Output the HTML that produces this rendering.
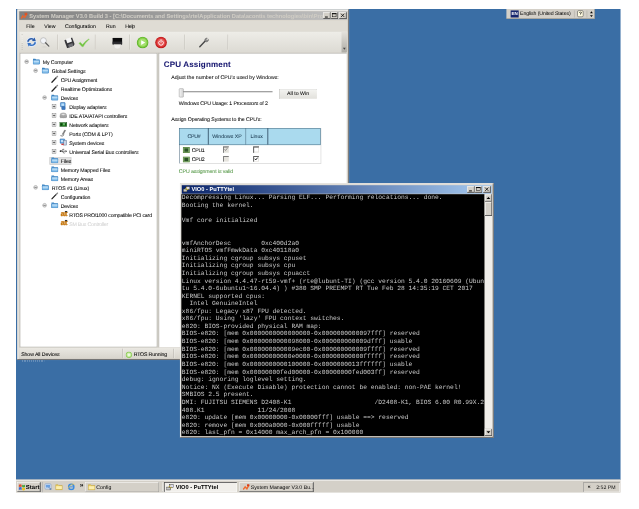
<!DOCTYPE html>
<html>
<head>
<meta charset="utf-8">
<title>Desktop</title>
<style>
html,body{margin:0;padding:0;background:#fff;}
body{width:639px;height:509px;overflow:hidden;position:relative;font-family:"Liberation Sans",sans-serif;}
#scr{position:absolute;left:16.2px;top:9px;width:1280px;height:1024px;transform:scale(0.47245);transform-origin:0 0;filter:blur(0.01px);overflow:hidden;font-size:11px;color:#000;text-rendering:geometricPrecision;}
.abs{position:absolute;}
.win{position:absolute;background:#d4d0c8;box-shadow:inset -1px -1px 0 #6a6a6a,inset 1px 1px 0 #d4d0c8,inset -2px -2px 0 #808080,inset 2px 2px 0 #fff;}
.tb{position:absolute;left:4px;right:4px;top:4px;height:18px;color:#fff;font-weight:bold;font-size:12px;line-height:18px;white-space:nowrap;overflow:hidden;}
.tb.act{background:linear-gradient(90deg,#0a246a,#a6caf0);}
.tb.inact{background:linear-gradient(90deg,#808080,#c0c0c0);color:#cfccc4;}
.cap{position:absolute;top:2px;width:16px;height:14px;background:#d4d0c8;box-shadow:inset -1px -1px 0 #404040,inset 1px 1px 0 #fff,inset -2px -2px 0 #808080;}
.cap svg{position:absolute;left:0;top:0;}
/* System manager */
#sm .menu{position:absolute;left:4px;right:4px;top:23px;height:24px;background:#dfdcd4;}
#sm .menu span{position:absolute;top:8px;font-size:11px;line-height:13px;}
#sm .tool{position:absolute;left:4px;right:4px;top:47px;height:44px;background:linear-gradient(#eeede8,#dcdad3);}
#sm .tool .sep{position:absolute;top:6px;width:1px;height:32px;background:#b8b5ad;box-shadow:1px 0 0 #f4f3ef;}
#tree{position:absolute;left:5px;top:92px;width:291px;height:623px;background:#fff;border:1px solid #9a9890;box-sizing:border-box;}
#right{position:absolute;left:299px;top:92px;width:398px;height:623px;background:#fff;border-left:1px solid #9a9890;border-top:1px solid #9a9890;box-sizing:border-box;}
.ti{position:absolute;height:19px;line-height:19px;font-size:11px;white-space:nowrap;}
.ti svg{position:absolute;margin-top:-2.500px;}
.ti span{margin-top:1.500px;margin-left:1px;letter-spacing:-0.2px;}
#sm{-webkit-text-stroke:0.1px;}
.exp{position:absolute;margin-top:-1.300px;width:9px;height:9px;border-radius:5px;border:1px solid #8c8c8c;background:#dedede;box-sizing:border-box;}
.exp:before{content:"";position:absolute;left:1px;top:3px;width:5px;height:1px;background:#404040;}
.exp.plus{border-radius:0;border-color:#7a7a7a;background:#fff;}
.exp.plus:before{background:#000;}
.exp.plus:after{content:"";position:absolute;left:3px;top:1px;width:1px;height:5px;background:#000;}
#status{position:absolute;left:4px;right:4px;top:716px;height:22px;background:linear-gradient(#eae8e2,#d8d5cd);}
.rt{font-size:11px;line-height:13px;white-space:nowrap;}
.hd{top:0;height:33px;line-height:38px;text-align:center;font-size:11px;color:#1c3a50;}
/* putty */
#pt .term{color:#adadad;position:absolute;left:3.5px;top:23px;width:642px;height:512px;background:#000;color:#c8c8c8;font-family:"Liberation Mono",monospace;font-size:13.333px;line-height:16.050px;white-space:pre;overflow:hidden;}
#pt .term pre{margin:0;position:absolute;left:1px;top:0.500px;font:inherit;}
.sb{position:absolute;background:#d4d0c8;box-shadow:inset -1px -1px 0 #404040,inset 1px 1px 0 #d4d0c8,inset -2px -2px 0 #808080,inset 2px 2px 0 #fff;}
/* taskbar */
#task{position:absolute;left:0;top:996px;width:1280px;height:28px;background:#d4d0c8;border-top:1px solid #d4d0c8;box-shadow:inset 0 1px 0 #fff;box-sizing:border-box;}
.btn{position:absolute;background:#d4d0c8;box-shadow:inset -1px -1px 0 #404040,inset 1px 1px 0 #fff,inset -2px -2px 0 #808080;font-size:11px;line-height:22px;white-space:nowrap;overflow:hidden;}
.btn.down{background:#f1efeb;box-shadow:inset 1px 1px 0 #404040,inset -1px -1px 0 #fff,inset 2px 2px 0 #808080;font-weight:bold;}
</style>
</head>
<body>
<div id="scr">

<div class="abs" style="left:0;top:0;width:1280px;height:996.500px;background:#3a6ea5;"></div>
<!-- language bar -->
<div id="lang" class="abs" style="left:1038px;top:0;width:187px;height:20.500px;background:#d4d0c8;box-shadow:inset -1px -1px 0 #8a8880;">
  <div class="abs" style="left:9px;top:3px;width:17px;height:15px;background:#16266e;color:#fff;font-size:9.500px;line-height:15px;text-align:center;font-weight:bold;">EN</div>
  <div class="abs" style="left:29px;top:4px;font-size:11px;line-height:13px;white-space:nowrap;letter-spacing:-0.25px;">English (United States)</div>
  <div class="abs" style="left:143px;top:3px;width:1px;height:15px;background:#a8a59d;"></div>
  <div class="abs" style="left:150px;top:3px;width:13px;height:14px;border:1px solid #333;border-radius:3px;background:#fffbe0;box-sizing:border-box;font-size:10px;line-height:12px;text-align:center;font-weight:bold;">?</div>
  <div class="abs" style="left:170px;top:3px;width:1px;height:15px;background:#a8a59d;"></div>
  <div class="abs" style="left:177px;top:5px;width:0;height:0;border-left:3px solid transparent;border-right:3px solid transparent;border-bottom:4px solid #000;"></div>
  <div class="abs" style="left:177px;top:12.500px;width:0;height:0;border-left:3px solid transparent;border-right:3px solid transparent;border-top:4px solid #000;"></div>
</div>

<div class="abs" style="left:12px;top:744px;width:48px;height:2px;opacity:.45;background:repeating-linear-gradient(90deg,#fff 0 2px,transparent 2px 4px);"></div>
<!-- SYSTEM MANAGER -->
<div id="sm" class="win" style="left:3px;top:1px;width:701.5px;height:742px;">
  <div class="tb inact"><svg class="abs" style="left:2px;top:1px" width="16" height="16" viewBox="0 0 16 16"><path d="M1 13 L5 6 L8 10 L13 2 L15 5 L10 14 L6 11 L3 15 Z" fill="#e8642c"/><rect x="9" y="2" width="6" height="5" fill="#e05020" opacity=".8"/></svg><span style="margin-left:21px;">System Manager V3.0 Build 3 - [C:\Documents and Settings\rte\Application Data\acontis technologies\bin\Project1.xml]</span>
    <div class="cap" style="right:35px;"><svg width="16" height="14"><rect x="4" y="9" width="6" height="2" fill="#000"/></svg></div>
    <div class="cap" style="right:19px;"><svg width="16" height="14"><rect x="3.500" y="2.500" width="8" height="7" fill="none" stroke="#000"/><rect x="3" y="2" width="9" height="2" fill="#000"/></svg></div>
    <div class="cap" style="right:1px;"><svg width="16" height="14"><path d="M4 3 L11 10 M11 3 L4 10" stroke="#000" stroke-width="1.600"/></svg></div>
  </div>
  <div class="menu"><span style="left:14.500px;">File</span><span style="left:53px;">View</span><span style="left:96.500px;">Configuration</span><span style="left:183.500px;">Run</span><span style="left:224px;letter-spacing:-0.4px;">Help</span></div>
  <div class="tool">
    <div class="abs" style="left:5px;top:5px;width:2px;height:34px;opacity:.5;background:repeating-linear-gradient(#a8a59d 0 1px,#f6f5f1 1px 2px,transparent 2px 4px);"></div>
    <!-- refresh -->
    <svg class="abs" style="left:13px;top:9px" width="26" height="26" viewBox="0 0 26 26"><g fill="none" stroke="#e2ecfa" stroke-width="7" stroke-linecap="round" opacity=".9"><path d="M5 12 C6 6 13 4 18 7.500"/><path d="M21 14 C20 20 13 22 8 18.500"/></g><path d="M3.500 12.500 C4 5 13 2.500 17.500 6 L19.500 3.500 L22 11.500 L13.500 10.500 L15.500 8.500 C12 6.500 8 8 7.500 12.500 Z" fill="#2c5ca8"/><path d="M22.500 13.500 C22 21 13 23.500 8.500 20 L6.500 22.500 L4 14.500 L12.500 15.500 L10.500 17.500 C14 19.500 18 18 18.500 13.500 Z" fill="#3a74c4"/></svg>
    <!-- magnifier -->
    <svg class="abs" style="left:42px;top:10px" width="24" height="24" viewBox="0 0 24 24"><circle cx="9" cy="9" r="6.300" fill="#f2f4f8" stroke="#aaa" stroke-width="1.300"/><path d="M13.500 13.500 L20.500 20.500" stroke="#5a5a5a" stroke-width="2.600" stroke-linecap="round"/><ellipse cx="11" cy="22.300" rx="7" ry="1" fill="#cfcdc7"/></svg>
    <div class="sep" style="left:81px;"></div>
    <!-- floppy -->
    <svg class="abs" style="left:95px;top:12px" width="23" height="23" viewBox="0 0 26 26"><g transform="rotate(-20 13 13)"><path d="M3 3 h20 v17 l-3 3 h-17 z" fill="#38383c"/><rect x="7.500" y="1.500" width="12" height="10.500" fill="#f6f6f6"/><rect x="8" y="16" width="11" height="7" fill="#707076"/></g></svg>
    <!-- check -->
    <svg class="abs" style="left:124px;top:12px" width="26" height="22" viewBox="0 0 28 24"><path d="M2 13.500 L5.500 11.500 L10.500 16.500 Q17 8 25.500 3.500 L26 4.500 Q18 11 12 22 L9.500 22 Z" fill="#70c240" stroke="#9cd878" stroke-width="1"/></svg>
    <div class="sep" style="left:160px;"></div>
    <!-- console -->
    <svg class="abs" style="left:197px;top:13px" width="21" height="26" viewBox="0 0 21 26"><rect x="0" y="0" width="21" height="14" rx="1" fill="#0c0c0e"/><rect x="0" y="8" width="21" height="6" fill="#2a2a2e"/><path d="M3 14 h15 l-1.500 8 q-6 3 -12 0 z" fill="#efeeeb" stroke="#d4d2cd" stroke-width=".8"/></svg>
    <div class="sep" style="left:233px;"></div>
    <!-- play -->
    <svg class="abs" style="left:248px;top:10px" width="26" height="26" viewBox="0 0 26 26"><circle cx="13" cy="13" r="12.300" fill="#5eb42a"/><circle cx="13" cy="13" r="10.500" fill="#86d048"/><circle cx="13" cy="13" r="8" fill="#a6e070"/><path d="M10 8 L18.500 13 L10 18 Z" fill="#fff"/></svg>
    <!-- power -->
    <svg class="abs" style="left:287px;top:10px" width="26" height="26" viewBox="0 0 26 26"><circle cx="13" cy="13" r="12.300" fill="#c01818"/><circle cx="13" cy="13" r="10.500" fill="#d83434"/><circle cx="13" cy="13" r="8" fill="#e85c5c"/><path d="M10 9.500 A5 5 0 1 0 16 9.500" fill="none" stroke="#fff" stroke-width="1.800" stroke-linecap="round"/><path d="M13 7 V12.500" stroke="#fff" stroke-width="1.800" stroke-linecap="round"/></svg>
    <div class="sep" style="left:349px;"></div>
    <!-- wrench -->
    <svg class="abs" style="left:379px;top:11px" width="24" height="24" viewBox="0 0 24 24"><path d="M3 21 L15 8" stroke="#4a4a4a" stroke-width="3" stroke-linecap="round"/><path d="M14 9 a4.500 4.500 0 0 1 5 -6.500 l-2.500 3 l2 2 l3 -2.500 a4.500 4.500 0 0 1 -6.500 5 z" fill="#8a8a8a" stroke="#555" stroke-width=".8"/></svg>
    <div class="sep" style="left:441px;"></div>
    <div class="abs" style="right:0;top:0;width:12px;height:44px;background:linear-gradient(#e4e2dc,#aeaca5);border-radius:0 0 3px 0;"><div class="abs" style="left:3px;top:34px;width:0;height:0;border-left:3px solid transparent;border-right:3px solid transparent;border-top:4px solid #444;"></div></div>
  </div>
  <div id="tree"><div class="abs" style="left:0;top:3px;">
<div class="ti" style="left:0;top:6.5px;width:288px;"><div class="exp " style="left:8.9px;top:5px;"></div><svg style="left:26.2px;top:2px" width="16" height="15" viewBox="0 0 16 15"><path d="M1 2.500 h5 l1.500 1.500 h7.500 v10 h-14 z" fill="#3f86c4"/><rect x="1" y="5" width="14" height="9" rx="1" fill="#8cc4ee"/><rect x="1.500" y="5.500" width="13" height="8" rx="1" fill="none" stroke="#3278b8" stroke-width="1"/><rect x="2.500" y="6.500" width="11" height="3" fill="#c4e2f8" opacity=".8"/></svg><span class="abs" style="left:46.7px;">My Computer</span></div>
<div class="ti" style="left:0;top:25.5px;width:288px;"><div class="exp " style="left:28.1px;top:5px;"></div><svg style="left:45.4px;top:2px" width="16" height="15" viewBox="0 0 16 15"><path d="M1 2.500 h5 l1.500 1.500 h7.500 v10 h-14 z" fill="#3f86c4"/><rect x="1" y="5" width="14" height="9" rx="1" fill="#8cc4ee"/><rect x="1.500" y="5.500" width="13" height="8" rx="1" fill="none" stroke="#3278b8" stroke-width="1"/><rect x="2.500" y="6.500" width="11" height="3" fill="#c4e2f8" opacity=".8"/></svg><span class="abs" style="left:65.7px;">Global Settings</span></div>
<div class="ti" style="left:0;top:44.5px;width:288px;"><svg style="left:64.6px;top:2px" width="16" height="16" viewBox="0 0 16 16"><path d="M2 14 L11 4.500" stroke="#222" stroke-width="2.600" stroke-linecap="round"/><path d="M11 4.500 L14 1.500" stroke="#8a8a8a" stroke-width="2.800" stroke-linecap="round"/></svg><span class="abs" style="left:84.7px;letter-spacing:-0.45px;">CPU Assignment</span></div>
<div class="ti" style="left:0;top:63.5px;width:288px;"><svg style="left:64.6px;top:2px" width="16" height="16" viewBox="0 0 16 16"><path d="M2 14 L11 4.500" stroke="#222" stroke-width="2.600" stroke-linecap="round"/><path d="M11 4.500 L14 1.500" stroke="#8a8a8a" stroke-width="2.800" stroke-linecap="round"/></svg><span class="abs" style="left:84.7px;">Realtime Optimizations</span></div>
<div class="ti" style="left:0;top:82.5px;width:288px;"><div class="exp " style="left:47.3px;top:5px;"></div><svg style="left:64.6px;top:2px" width="16" height="15" viewBox="0 0 16 15"><path d="M1 2.500 h5 l1.500 1.500 h7.500 v10 h-14 z" fill="#3f86c4"/><rect x="1" y="5" width="14" height="9" rx="1" fill="#8cc4ee"/><rect x="1.500" y="5.500" width="13" height="8" rx="1" fill="none" stroke="#3278b8" stroke-width="1"/><rect x="2.500" y="6.500" width="11" height="3" fill="#c4e2f8" opacity=".8"/></svg><span class="abs" style="left:84.7px;letter-spacing:-0.4px;">Devices</span></div>
<div class="ti" style="left:0;top:101.5px;width:288px;"><div class="exp plus" style="left:66.5px;top:5px;"></div><svg style="left:82.5px;top:1px" width="16" height="17" viewBox="0 0 16 17"><rect x="2" y="1" width="10" height="9" rx="1" fill="#5aa2e0" stroke="#2b5f9e"/><rect x="4" y="3" width="6" height="5" fill="#bfe0fa"/><rect x="5" y="10" width="7" height="6" fill="#3a78c0" stroke="#2b5f9e"/></svg><span class="abs" style="left:102.7px;">Display adapters</span></div>
<div class="ti" style="left:0;top:120.5px;width:288px;"><div class="exp plus" style="left:66.5px;top:5px;"></div><svg style="left:82.5px;top:2px" width="16" height="16" viewBox="0 0 16 16"><ellipse cx="8" cy="8" rx="7" ry="5" fill="#c8c8c8" stroke="#888"/><ellipse cx="8" cy="7" rx="4" ry="2.400" fill="#eee" stroke="#999"/><rect x="1" y="9" width="14" height="4" rx="1" fill="#aaa" stroke="#888"/></svg><span class="abs" style="left:102.7px;">IDE ATA/ATAPI controllers</span></div>
<div class="ti" style="left:0;top:139.5px;width:288px;"><div class="exp plus" style="left:66.5px;top:5px;"></div><svg style="left:82.5px;top:3px" width="16" height="14" viewBox="0 0 16 14"><rect x="0.500" y="3.500" width="15" height="8" fill="#2a8a2a" stroke="#1a4a1a"/><rect x="2" y="5" width="4" height="5" fill="#0d3d0d"/><rect x="8" y="5" width="3" height="3" fill="#9ad09a"/><rect x="12" y="5" width="2" height="5" fill="#124a12"/></svg><span class="abs" style="left:102.7px;">Network adapters</span></div>
<div class="ti" style="left:0;top:158.5px;width:288px;"><div class="exp plus" style="left:66.5px;top:5px;"></div><svg style="left:82.5px;top:2px" width="16" height="16" viewBox="0 0 16 16"><path d="M11 1 L13 2 L8 11 L6 10 Z" fill="#888" stroke="#444" stroke-width=".8"/><path d="M2 13 q4 3 8 -2" fill="none" stroke="#555" stroke-width="1.600"/></svg><span class="abs" style="left:102.7px;">Ports (COM &amp; LPT)</span></div>
<div class="ti" style="left:0;top:177.5px;width:288px;"><div class="exp plus" style="left:66.5px;top:5px;"></div><svg style="left:82.5px;top:1px" width="16" height="17" viewBox="0 0 16 17"><rect x="1" y="2" width="10" height="9" rx="1" fill="#5aa2e0" stroke="#2b5f9e"/><rect x="3" y="4" width="6" height="5" fill="#bfe0fa"/><rect x="9" y="5" width="6" height="10" fill="#c8d4e4" stroke="#56708f"/><rect x="4" y="12" width="5" height="3" fill="#d04040"/></svg><span class="abs" style="left:102.7px;">System devices</span></div>
<div class="ti" style="left:0;top:196.5px;width:288px;"><div class="exp plus" style="left:66.5px;top:5px;"></div><svg style="left:82.5px;top:3px" width="16" height="14" viewBox="0 0 16 14"><path d="M1 7 H13 M4 7 L7 3 H10 M6 7 L9 11 H11" fill="none" stroke="#333" stroke-width="1.400"/><path d="M13 4.500 L16 7 L13 9.500 Z" fill="#333"/><circle cx="2" cy="7" r="1.800" fill="#333"/></svg><span class="abs" style="left:102.7px;">Universal Serial Bus controllers</span></div>
<div class="ti" style="left:0;top:215.5px;width:288px;"><div class="abs" style="left:62.0px;top:1px;width:46px;height:16px;box-sizing:border-box;background:#e2e2e2;border:1px solid #c4c4c4;"></div><svg style="left:64.6px;top:2px" width="16" height="15" viewBox="0 0 16 15"><path d="M1 2.500 h5 l1.500 1.500 h7.500 v10 h-14 z" fill="#3f86c4"/><rect x="1" y="5" width="14" height="9" rx="1" fill="#8cc4ee"/><rect x="1.500" y="5.500" width="13" height="8" rx="1" fill="none" stroke="#3278b8" stroke-width="1"/><rect x="2.500" y="6.500" width="11" height="3" fill="#c4e2f8" opacity=".8"/></svg><span class="abs" style="left:84.7px;">Files</span></div>
<div class="ti" style="left:0;top:234.5px;width:288px;"><svg style="left:64.6px;top:2px" width="16" height="15" viewBox="0 0 16 15"><path d="M1 2.500 h5 l1.500 1.500 h7.500 v10 h-14 z" fill="#3f86c4"/><rect x="1" y="5" width="14" height="9" rx="1" fill="#8cc4ee"/><rect x="1.500" y="5.500" width="13" height="8" rx="1" fill="none" stroke="#3278b8" stroke-width="1"/><rect x="2.500" y="6.500" width="11" height="3" fill="#c4e2f8" opacity=".8"/></svg><span class="abs" style="left:84.7px;">Memory Mapped Files</span></div>
<div class="ti" style="left:0;top:253.5px;width:288px;"><svg style="left:64.6px;top:2px" width="16" height="15" viewBox="0 0 16 15"><path d="M1 2.500 h5 l1.500 1.500 h7.500 v10 h-14 z" fill="#3f86c4"/><rect x="1" y="5" width="14" height="9" rx="1" fill="#8cc4ee"/><rect x="1.500" y="5.500" width="13" height="8" rx="1" fill="none" stroke="#3278b8" stroke-width="1"/><rect x="2.500" y="6.500" width="11" height="3" fill="#c4e2f8" opacity=".8"/></svg><span class="abs" style="left:84.7px;">Memory Areas</span></div>
<div class="ti" style="left:0;top:272.5px;width:288px;"><div class="exp " style="left:28.1px;top:5px;"></div><svg style="left:45.4px;top:2px" width="16" height="15" viewBox="0 0 16 15"><path d="M1 2.500 h5 l1.500 1.500 h7.500 v10 h-14 z" fill="#3f86c4"/><rect x="1" y="5" width="14" height="9" rx="1" fill="#8cc4ee"/><rect x="1.500" y="5.500" width="13" height="8" rx="1" fill="none" stroke="#3278b8" stroke-width="1"/><rect x="2.500" y="6.500" width="11" height="3" fill="#c4e2f8" opacity=".8"/></svg><span class="abs" style="left:65.7px;">RTOS #1 (Linux)</span></div>
<div class="ti" style="left:0;top:291.5px;width:288px;"><svg style="left:64.6px;top:2px" width="16" height="16" viewBox="0 0 16 16"><path d="M2 14 L11 4.500" stroke="#222" stroke-width="2.600" stroke-linecap="round"/><path d="M11 4.500 L14 1.500" stroke="#8a8a8a" stroke-width="2.800" stroke-linecap="round"/></svg><span class="abs" style="left:84.7px;">Configuration</span></div>
<div class="ti" style="left:0;top:310.5px;width:288px;"><div class="exp " style="left:47.3px;top:5px;"></div><svg style="left:64.6px;top:2px" width="16" height="15" viewBox="0 0 16 15"><path d="M1 2.500 h5 l1.500 1.500 h7.500 v10 h-14 z" fill="#3f86c4"/><rect x="1" y="5" width="14" height="9" rx="1" fill="#8cc4ee"/><rect x="1.500" y="5.500" width="13" height="8" rx="1" fill="none" stroke="#3278b8" stroke-width="1"/><rect x="2.500" y="6.500" width="11" height="3" fill="#c4e2f8" opacity=".8"/></svg><span class="abs" style="left:84.7px;letter-spacing:-0.4px;">Devices</span></div>
<div class="ti" style="left:0;top:329.5px;width:288px;"><svg style="left:84.5px;top:2px" width="16" height="16" viewBox="0 0 16 16"><text x="0" y="13" font-family="Liberation Sans" font-weight="bold" font-size="15" fill="#d07c08" stroke="#b86800" stroke-width=".7" textLength="15" lengthAdjust="spacingAndGlyphs">at</text><rect x="9.500" y="1.500" width="5" height="2.500" fill="#333"/></svg><span class="abs" style="left:102.5px;letter-spacing:-0.35px;">RTOS PRO/1000 compatible PCI card</span></div>
<div class="ti" style="left:0;top:348.5px;width:288px;"><svg style="left:84.5px;top:2px" width="16" height="16" viewBox="0 0 16 16"><text x="0" y="13" font-family="Liberation Sans" font-weight="bold" font-size="15" fill="#d07c08" stroke="#b86800" stroke-width=".7" textLength="15" lengthAdjust="spacingAndGlyphs">at</text><rect x="9.500" y="1.500" width="5" height="2.500" fill="#333"/></svg><span class="abs" style="left:102.5px;color:#d2d2d2;letter-spacing:-0.4px;">SM Bus Controller</span></div>
</div></div>
  <div id="right"><div class="abs" style="left:4px;top:2px;">
    <div class="abs" style="left:5.6px;top:12.0px;font-size:17px;font-weight:bold;color:#14146e;line-height:20px;white-space:nowrap;letter-spacing:0.35px;">CPU Assignment</div>
    <div class="abs rt" style="left:21.5px;top:42.5px;">Adjust the number of CPU's used by Windows:</div>
    <div class="abs" style="left:46.0px;top:78.0px;width:190px;height:2px;background:#8c8c8c;box-shadow:0 1px 0 #e8e8e8;"></div>
    <div class="abs" style="left:38.0px;top:72.0px;width:10px;height:19px;background:linear-gradient(90deg,#f4f4f4,#d0d0d0);border:1px solid #8a8a8a;border-radius:2px;box-sizing:border-box;"></div>
    <div class="abs" style="left:249.5px;top:73.0px;width:81px;height:22px;box-sizing:border-box;border:1px solid #8a8a86;border-right-color:#5a5a58;border-bottom-color:#5a5a58;border-radius:2px;background:linear-gradient(#f4f4f1,#e2e1dc);font-size:11px;line-height:20px;text-align:center;">All to Win</div>
    <div class="abs rt" style="left:37.4px;top:97.5px;letter-spacing:-0.25px;">Windows CPU Usage: 1 Processors of 2</div>
    <div class="abs rt" style="left:21.5px;top:132.5px;letter-spacing:-0.15px;">Assign Operating Systems to the CPU's:</div>
    <div class="abs" style="left:38.5px;top:156.0px;width:300px;height:75px;box-sizing:border-box;border-left:1.500px solid #3c5c72;border-right:1px solid #c6c6c6;border-bottom:1px solid #c0c0c0;background:#fff;">
      <div class="abs" style="left:-1.500px;top:0;width:300px;height:36px;box-sizing:border-box;background:#aadaee;border:1.500px solid #3c5c72;"></div>
      <div class="abs" style="left:59.500px;top:0;width:1.500px;height:35px;background:#3c5c72;"></div>
      <div class="abs" style="left:139px;top:0;width:1.500px;height:35px;background:#3c5c72;"></div>
      <div class="abs" style="left:185.500px;top:0;width:1.500px;height:35px;background:#3c5c72;"></div>
      <div class="abs hd" style="left:0;width:60px;letter-spacing:-0.5px;">CPU#</div>
      <div class="abs hd" style="left:61px;width:78px;">Windows XP</div>
      <div class="abs hd" style="left:140px;width:46px;">Linux</div>
    </div>
<svg class="abs" style="left:46.0px;top:196.0px" width="15" height="13" viewBox="0 0 15 13"><rect x="0" y="0" width="15" height="13" fill="#55803f"/><rect x="1.500" y="1.500" width="12" height="10" fill="#86b070"/><rect x="3.500" y="3" width="8" height="7" fill="#2a5226"/></svg><div class="abs rt" style="left:65.2px;top:197.3px;letter-spacing:-0.7px;">CPU1</div><svg class="abs" style="left:46.0px;top:215.5px" width="15" height="13" viewBox="0 0 15 13"><rect x="0" y="0" width="15" height="13" fill="#55803f"/><rect x="1.500" y="1.500" width="12" height="10" fill="#86b070"/><rect x="3.500" y="3" width="8" height="7" fill="#2a5226"/></svg><div class="abs rt" style="left:65.2px;top:216.8px;letter-spacing:-0.7px;">CPU2</div><div class="abs" style="left:131.0px;top:195.0px;width:13px;height:13px;box-sizing:border-box;background:#e6e4de;box-shadow:inset 1px 1px 0 #909090,inset -1px -1px 0 #fff,inset 2px 2px 0 #6a6a6a,inset -2px -2px 0 #dcd9d2;"><svg class="abs" style="left:0;top:0" width="13" height="13"><path d="M3.500 6 L5.500 8.500 L9.500 3.500" fill="none" stroke="#808080" stroke-width="1.800"/></svg></div><div class="abs" style="left:131.0px;top:214.5px;width:13px;height:13px;box-sizing:border-box;background:#e6e4de;box-shadow:inset 1px 1px 0 #909090,inset -1px -1px 0 #fff,inset 2px 2px 0 #6a6a6a,inset -2px -2px 0 #dcd9d2;"></div><div class="abs" style="left:195.0px;top:195.0px;width:13px;height:13px;box-sizing:border-box;background:#fff;box-shadow:inset 1px 1px 0 #808080,inset -1px -1px 0 #fff,inset 2px 2px 0 #404040,inset -2px -2px 0 #d4d0c8;"></div><div class="abs" style="left:195.0px;top:214.5px;width:13px;height:13px;box-sizing:border-box;background:#fff;box-shadow:inset 1px 1px 0 #808080,inset -1px -1px 0 #fff,inset 2px 2px 0 #404040,inset -2px -2px 0 #d4d0c8;"><svg class="abs" style="left:0;top:0" width="13" height="13"><path d="M3.500 6 L5.500 8.500 L9.500 3.500" fill="none" stroke="#000" stroke-width="1.800"/></svg></div><div class="abs rt" style="left:37.7px;top:243.2px;color:#4f9440;letter-spacing:-0.2px;">CPU assignment is valid</div>
  </div></div>
  <div id="status">
    <div class="abs" style="left:4px;top:8.500px;font-size:11px;line-height:13px;white-space:nowrap;letter-spacing:-0.2px;">Show All Devices</div>
    <div class="abs" style="left:218px;top:2px;width:1px;height:20px;background:#aaa79f;box-shadow:1px 0 0 #f8f7f4;"></div>
    <svg class="abs" style="left:225px;top:7.500px" width="14" height="14" viewBox="0 0 14 14"><circle cx="7" cy="7" r="6" fill="#c8eca0" stroke="#7cc444" stroke-width="1.600"/><circle cx="7" cy="7" r="2.800" fill="#eafadc"/></svg>
    <div class="abs" style="left:242px;top:8.500px;font-size:11px;line-height:13px;white-space:nowrap;letter-spacing:-0.3px;">RTOS Running</div>
    <div class="abs" style="left:325.500px;top:2px;width:1px;height:20px;background:#aaa79f;box-shadow:1px 0 0 #f8f7f4;"></div>
  </div>
</div>

<!-- PUTTY -->
<div id="pt" class="win" style="left:346.5px;top:369px;width:664.5px;height:539px;">
  <div class="tb act">
    <svg class="abs" style="left:2px;top:1px" width="16" height="16" viewBox="0 0 16 16"><rect x="1" y="7" width="8" height="6" fill="#c8c8c8" stroke="#333" stroke-width="1"/><rect x="7" y="2" width="8" height="6" fill="#dcdcf0" stroke="#333" stroke-width="1"/><path d="M5 7 L9 4 M8 9 l4 -2" stroke="#ffe000" stroke-width="1.5"/></svg>
    <span style="margin-left:21px;">VIO0 - PuTTYtel</span>
    <div class="cap" style="right:36px;"><svg width="16" height="14"><rect x="4" y="9" width="6" height="2" fill="#000"/></svg></div>
    <div class="cap" style="right:20px;"><svg width="16" height="14"><rect x="3.5" y="2.5" width="8" height="7" fill="none" stroke="#000"/><rect x="3" y="2" width="9" height="2" fill="#000"/></svg></div>
    <div class="cap" style="right:2px;"><svg width="16" height="14"><path d="M4 3 L11 10 M11 3 L4 10" stroke="#000" stroke-width="1.6"/></svg></div>
  </div>
  <div class="term"><pre id="ptxt">Decompressing Linux... Parsing ELF... Performing relocations... done.
Booting the kernel.

Vmf core initialized


vmfAnchorDesc        0xc400d2a0
miniRTOS vmfFmwkData 0xc40118a0
Initializing cgroup subsys cpuset
Initializing cgroup subsys cpu
Initializing cgroup subsys cpuacct
Linux version 4.4.47-rt59-vmf+ (rte@lubunt-TI) (gcc version 5.4.0 20160609 (Ubun
tu 5.4.0-6ubuntu1~16.04.4) ) #380 SMP PREEMPT RT Tue Feb 28 14:35:19 CET 2017
KERNEL supported cpus:
  Intel GenuineIntel
x86/fpu: Legacy x87 FPU detected.
x86/fpu: Using 'lazy' FPU context switches.
e820: BIOS-provided physical RAM map:
BIOS-e820: [mem 0x0000000000000000-0x0000000000097fff] reserved
BIOS-e820: [mem 0x0000000000098000-0x000000000009dfff] usable
BIOS-e820: [mem 0x000000000009ec00-0x000000000009ffff] reserved
BIOS-e820: [mem 0x00000000000e0000-0x00000000000fffff] reserved
BIOS-e820: [mem 0x0000000000100000-0x0000000013ffffff] usable
BIOS-e820: [mem 0x00000000fed00000-0x00000000fed003ff] reserved
debug: ignoring loglevel setting.
Notice: NX (Execute Disable) protection cannot be enabled: non-PAE kernel!
SMBIOS 2.5 present.
DMI: FUJITSU SIEMENS D2408-K1                      /D2408-K1, BIOS 6.00 R0.99X.2
408.K1              11/24/2008
e820: update [mem 0x00000000-0x00000fff] usable ==&gt; reserved
e820: remove [mem 0x000a0000-0x000fffff] usable
e820: last_pfn = 0x14000 max_arch_pfn = 0x100000</pre></div>
  <div class="abs" style="left:645.5px;top:23px;width:16px;height:512px;background:#f0eeea;">
    <div class="sb" style="left:0;top:0;width:16px;height:16px;"><div class="abs" style="left:4px;top:6px;width:0;height:0;border-left:4px solid transparent;border-right:4px solid transparent;border-bottom:4px solid #000;"></div></div>
    <div class="sb" style="left:0;top:16px;width:16px;height:30px;"></div>
    <div class="sb" style="left:0;bottom:0;width:16px;height:16px;"><div class="abs" style="left:4px;top:6px;width:0;height:0;border-left:4px solid transparent;border-right:4px solid transparent;border-top:4px solid #000;"></div></div>
  </div>
</div>

<!-- TASKBAR -->
<div id="task">
  <!-- start -->
  <div class="btn" style="left:2px;top:4px;width:50px;height:22px;font-weight:bold;">
    <svg class="abs" style="left:3px;top:3px" width="16" height="16" viewBox="0 0 16 16"><path d="M1 3 q3 -2 6 0 v5 q-3 -2 -6 0 z" fill="#e0502c"/><path d="M8 3 q3 2 6 0 v5 q-3 2 -6 0 z" fill="#4aa83c"/><path d="M1 9 q3 -2 6 0 v5 q-3 -2 -6 0 z" fill="#3c6cd0"/><path d="M8 9 q3 2 6 0 v5 q-3 2 -6 0 z" fill="#f0c020"/></svg>
    <span class="abs" style="left:18.500px;top:0;font-size:12.500px;letter-spacing:0.2px;">Start</span>
  </div>
  <div class="abs" style="left:55px;top:4px;width:1px;height:22px;background:#808080;box-shadow:1px 0 0 #fff;"></div>
  <!-- quick launch -->
  <svg class="abs" style="left:60px;top:6px" width="16" height="16" viewBox="0 0 16 16"><rect x="1" y="2" width="13" height="11" rx="2" fill="#dfeaf8" stroke="#5c80b8"/><rect x="3" y="4" width="9" height="6" fill="#6aa0e0"/><path d="M9 9 l5 5 M11 14 h3 v-3" stroke="#5878a8" stroke-width="1.500" fill="none"/></svg>
  <svg class="abs" style="left:83px;top:6px" width="16" height="16" viewBox="0 0 16 16"><path d="M1 4 h5 l1.500 1.500 h7.500 v9 h-14 z" fill="#f0d060" stroke="#b89a30"/><rect x="2" y="7" width="12" height="6" fill="#fbeeb0"/></svg>
  <svg class="abs" style="left:109px;top:6px" width="16" height="16" viewBox="0 0 16 16"><circle cx="8" cy="8.500" r="5.500" fill="none" stroke="#3a8ae0" stroke-width="3"/><path d="M3.500 8.500 h9" stroke="#3a8ae0" stroke-width="2"/><path d="M1 12 q7 -12 14 -9" fill="none" stroke="#e8c840" stroke-width="1.400"/></svg>
  <div class="abs" style="left:135px;top:2px;font-size:14px;font-weight:bold;line-height:14px;">&raquo;</div>
  <!-- config -->
  <div class="btn" style="left:146px;top:4px;width:157px;height:22px;box-shadow:inset -1px -1px 0 #808080,inset 1px 1px 0 #fff;">
    <svg class="abs" style="left:6px;top:3px" width="16" height="16" viewBox="0 0 16 16"><path d="M1 3 h5 l1.500 1.500 h7.500 v9 h-14 z" fill="#f0d060" stroke="#b89a30"/><rect x="2" y="6" width="12" height="6.500" fill="#fbeeb0"/></svg>
    <span class="abs" style="left:24px;top:0;">Config</span>
  </div>
  <div class="abs" style="left:309px;top:5px;width:3px;height:20px;background:#d4d0c8;box-shadow:inset 1px 1px 0 #fff,inset -1px -1px 0 #808080;"></div>
  <!-- putty -->
  <div class="btn down" style="left:313px;top:4px;width:155px;height:22px;">
    <svg class="abs" style="left:5px;top:4px" width="16" height="16" viewBox="0 0 16 16"><rect x="1" y="7" width="8" height="6" fill="#c8c8c8" stroke="#333" stroke-width="1"/><rect x="7" y="2" width="8" height="6" fill="#dcdcf0" stroke="#333" stroke-width="1"/><path d="M5 7 L9 4 M8 9 l4 -2" stroke="#c8a800" stroke-width="1.500"/></svg>
    <span class="abs" style="left:25px;top:1px;font-size:12px;">VIO0 - PuTTYtel</span>
  </div>
  <!-- system manager -->
  <div class="btn" style="left:473px;top:4px;width:157px;height:22px;">
    <svg class="abs" style="left:6px;top:3px" width="16" height="16" viewBox="0 0 16 16"><path d="M1 12 L6 5 L9 9 L14 2 L15 5 L10 14 L6 10 L3 14 Z" fill="#f0682c"/><rect x="10" y="2" width="5" height="4" fill="#d83c18"/></svg>
    <span class="abs" style="left:24px;top:0;">System Manager V3.0 Bu...</span>
  </div>
  <!-- tray -->
  <div class="abs" style="left:1201px;top:4px;width:77px;height:22px;box-shadow:inset 1px 1px 0 #808080,inset -1px -1px 0 #fff;">
    <div class="abs" style="left:9px;top:4px;font-size:11px;font-weight:bold;line-height:13px;">&laquo;</div>
    <div class="abs" style="left:27px;top:5px;font-size:11px;line-height:13px;white-space:nowrap;">2:52 PM</div>
  </div>
</div>

</div>
</body>
</html>
